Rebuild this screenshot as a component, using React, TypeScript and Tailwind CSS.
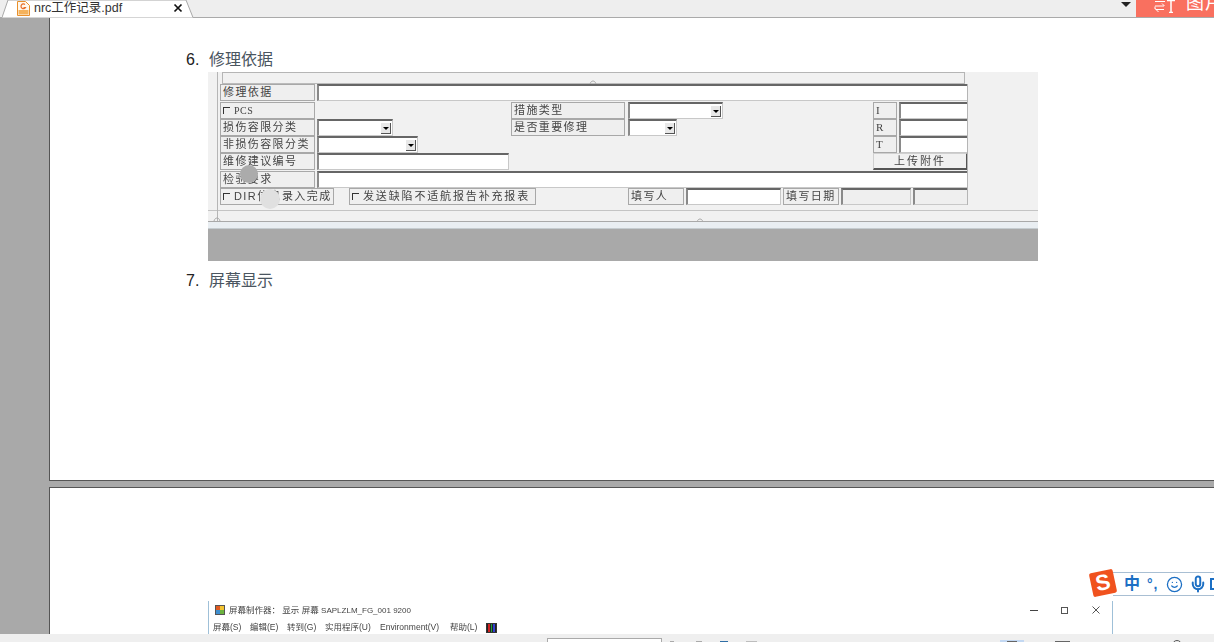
import { Mic, Smile } from "lucide-react";
import type { ReactNode } from "react";

const CJK = "font-['Liberation_Sans','Noto_Sans_CJK_SC',sans-serif]";

function Label({ width, children, className = "" }: { width: number; children: ReactNode; className?: string }) {
  return (
    <div
      className={`flex h-full shrink-0 items-center overflow-hidden whitespace-nowrap border border-[#a8a8a8] bg-[#efefef] pl-[2px] text-[11px] leading-none tracking-[1.4px] text-[#444] ${className}`}
      style={{ width }}
    >
      {children}
    </div>
  );
}

function Field({ width, gray, arrow }: { width: number; gray?: boolean; arrow?: boolean }) {
  return (
    <div
      className={`relative h-full shrink-0 border-t-2 border-l-2 border-t-[#666] border-l-[#8a8a8a] border-r border-b border-r-[#c8c8c8] border-b-[#c8c8c8] ${gray ? "bg-[#efefef]" : "bg-white"}`}
      style={{ width }}
    >
      {arrow && (
        <span className="absolute right-[1px] bottom-[1px] flex h-[11px] w-[10px] items-center justify-center border-r border-b border-[#555] bg-[#e8e8e8]">
          <span className="h-0 w-0 border-x-[3px] border-t-[3px] border-x-transparent border-t-black" />
        </span>
      )}
    </div>
  );
}

function Check() {
  return <span className="mr-[4px] h-[7px] w-[7px] shrink-0 border-t border-l border-[#333]" />;
}

function Notch({ className }: { className: string }) {
  return (
    <svg className={`absolute ${className}`} width="8" height="5" viewBox="0 0 8 5" fill="none" stroke="#aaa">
      <path d="M1 5C2 1 6 1 7 5" />
    </svg>
  );
}

function FormImage() {
  return (
    <div className={`relative flex h-[189px] w-[830px] flex-col overflow-hidden bg-[#f1f1f1] ${CJK}`}>
      <div className="flex flex-1 flex-col pl-[12px] blur-[0.5px]">
        <div className="ml-[2px] h-[11px] w-[743px] border-x border-t border-[#b5b5b5]" />
        <div className="ml-[2px] h-px w-[743px] bg-[#bbb]" />
        <div className="flex h-[17px] items-stretch">
          <Label width={95}>修理依据</Label>
          <div className="ml-[2px]"><Field width={651} /></div>
        </div>
        <div className="mt-[1px] flex h-[17px]">
          <Label width={95}><Check /><span className="font-['Liberation_Serif'] text-[10px] tracking-[0.5px]">PCS</span></Label>
          <div className="ml-[196px]"><Label width={114}>措施类型</Label></div>
          <div className="ml-[3px]"><Field width={95} arrow /></div>
          <div className="ml-[150px]"><Label width={24} className="font-['Liberation_Serif']">I</Label></div>
          <div className="ml-[2px]"><Field width={69} /></div>
        </div>
        <div className="flex h-[17px]">
          <Label width={95}>损伤容限分类</Label>
          <div className="ml-[2px]"><Field width={76} arrow /></div>
          <div className="ml-[118px]"><Label width={114}>是否重要修理</Label></div>
          <div className="ml-[3px]"><Field width={49} arrow /></div>
          <div className="ml-[196px]"><Label width={24} className="font-['Liberation_Serif']">R</Label></div>
          <div className="ml-[2px]"><Field width={69} /></div>
        </div>
        <div className="flex h-[17px]">
          <Label width={95} className="tracking-[0.6px]">非损伤容限分类</Label>
          <div className="ml-[2px]"><Field width={101} arrow /></div>
          <div className="ml-[455px]"><Label width={24} className="font-['Liberation_Serif']">T</Label></div>
          <div className="ml-[2px]"><Field width={69} /></div>
        </div>
        <div className="flex h-[17px]">
          <Label width={95}>维修建议编号</Label>
          <div className="ml-[2px]"><Field width={192} /></div>
          <button className="ml-[364px] flex h-full w-[95px] items-center justify-center border border-r-2 border-b-2 border-[#d0d0d0] border-r-[#555] border-b-[#555] text-[11px] tracking-[2px] text-[#444]">
            上传附件
          </button>
        </div>
        <div className="mt-px flex h-[17px]">
          <Label width={95}>检验要求</Label>
          <div className="ml-[2px]"><Field width={651} /></div>
        </div>
        <div className="flex h-[17px]">
          <Label width={114} className="tracking-[0.7px]"><Check />DIR信息录入完成</Label>
          <div className="ml-[15px]"><Label width={187} className="tracking-[1.85px]"><Check />发送缺陷不适航报告补充报表</Label></div>
          <div className="ml-[92px]"><Label width={56}>填写人</Label></div>
          <div className="ml-[2px]"><Field width={95} /></div>
          <div className="ml-[2px]"><Label width={56}>填写日期</Label></div>
          <div className="ml-[2px]"><Field width={70} gray /></div>
          <div className="ml-[2px]"><Field width={55} gray /></div>
        </div>
      </div>
      <div className="h-px bg-[#c4c4c4]" />
      <div className="h-[10px]" />
      <div className="h-px bg-[#a9a9a9]" />
      <div className="h-[6px] bg-[#e9eef2]" />
      <div className="h-[1px] bg-[#c5ccd0]" />
      <div className="h-[32px] bg-[#a9a9a9]" />
      <span className="absolute top-0 left-[9px] h-[149px] w-px bg-[#b5b5b5]" />
      <span className="absolute top-[12px] left-[759px] h-[121px] w-px bg-[#b5b5b5]" />
      <Notch className="top-[144px] left-[5px]" />
      <Notch className="top-[7px] left-[381px]" />
      <Notch className="top-[145px] left-[488px]" />
      <span className="absolute top-[93px] left-[32px] h-[18px] w-[18px] rounded-full bg-[#ababab]" />
      <span className="absolute top-[117px] left-[52px] h-[20px] w-[20px] rounded-full bg-[#e0e0e0]" />
    </div>
  );
}

function ListItem({ n, text }: { n: number; text: string }) {
  return (
    <div className={`flex h-[22px] items-center text-[16px] leading-none ${CJK}`}>
      <span className="w-[23px] text-[#222]">{n}.</span>
      <span className="text-[#4a5560]">{text}</span>
    </div>
  );
}

function TabBar() {
  return (
    <div className="flex h-[18px] shrink-0 items-start justify-between border-b border-[#aaaaaa] bg-[#eeeeee]">
      <div className="relative ml-[2px] flex h-[17px] w-[192px] items-center">
        <svg className="absolute inset-0" width="192" height="18" viewBox="0 0 192 18">
          <path d="M0 17.5 L6 0 H184 L191 17.5" fill="#ffffff" stroke="#a8a8a8" />
        </svg>
        <svg className="relative ml-[15px]" width="13" height="15" viewBox="0 0 13 15">
          <path d="M.5.5h8l4 4v10H.5z" fill="#fff8ee" stroke="#e8902c" />
          <path d="M8 3.5a2.4 2.4 0 1 0 .5 3H6.5" fill="none" stroke="#e8702c" strokeWidth="1.2" />
          <rect x="1.5" y="9" width="10" height="4.5" fill="#f4b25c" />
        </svg>
        <span className={`relative ml-[4px] text-[12.5px] leading-none text-[#333] ${CJK}`}>nrc工作记录.pdf</span>
        <svg className="absolute top-[3px] left-[171px]" width="10" height="10" viewBox="0 0 10 10">
          <path d="M1.5 1.5l7 7M8.5 1.5l-7 7" stroke="#111" strokeWidth="1.7" />
        </svg>
      </div>
      <div className="flex h-[17px] items-start">
        <span className="mt-[2px] mr-[5px] h-0 w-0 border-x-[5px] border-t-[5px] border-x-transparent border-t-[#222]" />
        <div className={`flex h-[17px] w-[78px] items-start overflow-hidden bg-[#f9705f] pl-[18px] text-white ${CJK}`}>
          <svg className="shrink-0" width="22" height="13" viewBox="0 0 22 13" fill="none" stroke="#fff">
            <path d="M1 1.5h10M1 6h9M8 3.5l2.5 2.5M1 6.5V9h1M2 9.5h8M2 9.5l2.5 2.5" />
            <path d="M13 .5h8M17 .5v12M15 12.5h4" strokeWidth="1.5" />
          </svg>
          <span className="mt-[-6px] ml-[10px] text-[18px] leading-none tracking-[1px] whitespace-nowrap">图片</span>
        </div>
      </div>
    </div>
  );
}

function ScreenWindow() {
  return (
    <div className={`mt-auto ml-[158px] flex h-[33px] w-[905px] flex-col border-x border-x-[#9fc0d8] bg-white text-[8.5px] leading-none text-[#444] blur-[0.25px] ${CJK}`}>
      <div className="flex h-[16px] items-center pt-[2px]">
        <span className="ml-[6px] grid h-[10px] w-[10px] grid-cols-2 border border-[#555] bg-[#f0a020]">
          <span className="bg-[#e05a20]" />
          <span className="bg-[#f4c430]" />
          <span className="bg-[#3f8fd0]" />
          <span className="bg-[#6cb33f]" />
        </span>
        <span className="ml-[4px] whitespace-nowrap">屏幕制作器： 显示 屏幕 <span className="text-[8px]">SAPLZLM_FG_001 9200</span></span>
        <div className="ml-auto flex items-center">
          <span className="h-px w-[8px] bg-[#444]" />
          <span className="ml-[23px] h-[7px] w-[7px] border border-[#555]" />
          <svg className="mr-[12px] ml-[24px]" width="8" height="8" viewBox="0 0 8 8">
            <path d="M.5.5l7 7M7.5.5l-7 7" stroke="#555" />
          </svg>
        </div>
      </div>
      <div className="mt-[4px] flex h-[13px] items-center pl-[4px] whitespace-nowrap">
        <span className="w-[37px]">屏幕(S)</span>
        <span className="w-[37px]">编辑(E)</span>
        <span className="w-[38px]">转到(G)</span>
        <span className="w-[55px]">实用程序(U)</span>
        <span className="w-[70px]">Environment(V)</span>
        <span className="w-[36px]">帮助(L)</span>
        <span className="flex h-[10px] w-[11px] items-stretch gap-px border border-[#333] bg-[#222] px-px">
          <span className="flex-1 bg-[#d02020]" />
          <span className="flex-1 bg-[#20a040]" />
          <span className="flex-1 bg-[#3040d0]" />
        </span>
      </div>
    </div>
  );
}

function BottomBar() {
  return (
    <div className="flex h-[8px] shrink-0 items-start overflow-hidden bg-[#efefef]">
      <div className="mt-[4px] ml-[547px] h-[8px] w-[115px] border border-[#aaa] bg-white" />
      <span className="mt-[7px] ml-[8px] h-[2px] w-[4px] bg-[#aaa]" />
      <span className="mt-[7px] ml-[22px] h-[2px] w-[6px] bg-[#aaa]" />
      <span className="mt-[7px] ml-[18px] h-[8px] w-[8px] bg-[#2f6ea5]" />
      <span className="mt-[7px] ml-[18px] h-[8px] w-[11px] bg-[#bdbdbd]" />
      <div className="mt-[6px] ml-[243px] flex h-[8px] w-[24px] justify-center bg-[#c3d8f2] pt-[1px]">
        <span className="h-[8px] w-[10px] bg-[#666]" />
      </div>
      <span className="mt-[7px] ml-[31px] h-[8px] w-[15px] bg-[#666]" />
      <span className="mt-[6px] ml-[102px] h-[10px] w-[10px] rounded-full border border-[#555]" />
    </div>
  );
}

function ImeBar() {
  return (
    <div className={`absolute top-[569px] left-[1091px] flex h-[27px] items-end ${CJK}`}>
      <div className="relative z-10 mb-[1px] flex h-[24px] w-[24px] -rotate-12 items-center justify-center rounded-[2px] bg-[#f0521e] text-[22px] leading-none font-bold text-white">
        S
      </div>
      <div className="-ml-[2px] flex h-[24px] w-[101px] items-center border-y border-[#a9bfd3] bg-white pl-[11px] text-[#1c6fc4]">
        <span className="text-[16px] leading-none font-bold">中</span>
        <span className="ml-[7px] text-[14px] leading-none font-bold tracking-[1px] whitespace-nowrap">°,</span>
        <Smile className="ml-[7px] shrink-0" size={17} strokeWidth={1.8} />
        <Mic className="ml-[6px] shrink-0" size={18} strokeWidth={2.6} />
        <span className="ml-[3px] h-[12px] w-[6px] shrink-0 border-2 border-[#1c6fc4]" />
      </div>
    </div>
  );
}

export default function App() {
  return (
    <div className="relative flex h-[642px] w-[1214px] flex-col overflow-hidden bg-[#a9a9a9]">
      <TabBar />
      <div className="flex min-h-0 flex-1">
        <div className="w-[49px] shrink-0" />
        <div className="flex flex-1 flex-col">
          <div className="h-[463px] shrink-0 border-b border-l border-[#555] bg-white pt-[31px] pl-[136px]">
            <ListItem n={6} text="修理依据" />
            <div className="mt-[1px] ml-[22px]">
              <FormImage />
            </div>
            <div className="mt-[9px]">
              <ListItem n={7} text="屏幕显示" />
            </div>
          </div>
          <div className="mt-[6px] flex flex-1 flex-col border-t border-l border-[#555] bg-white">
            <ScreenWindow />
          </div>
        </div>
      </div>
      <BottomBar />
      <ImeBar />
    </div>
  );
}
